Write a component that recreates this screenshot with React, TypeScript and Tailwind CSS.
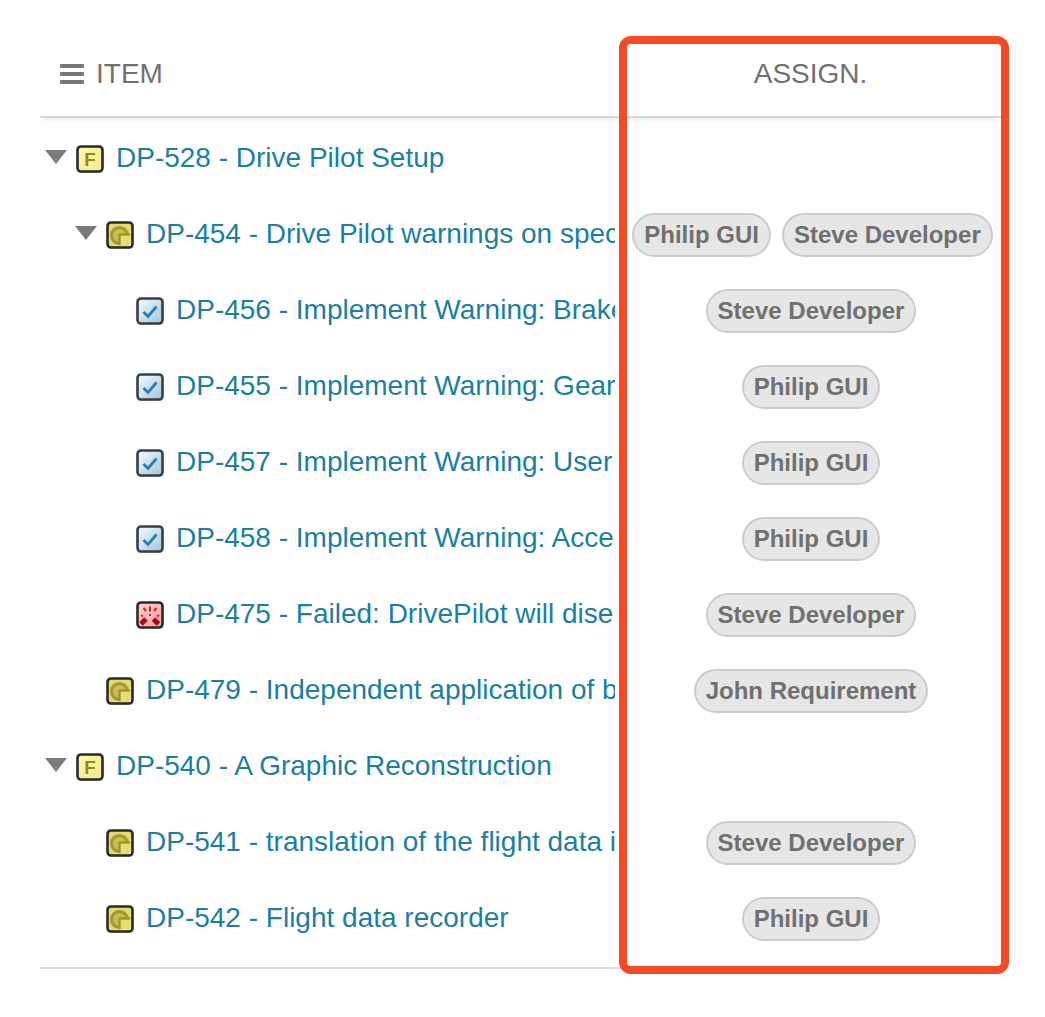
const rows = [
  { level: 0, icon: "feature", open: true, label: "DP-528 - Drive Pilot Setup", people: [] },
  { level: 1, icon: "goal", open: true, label: "DP-454 - Drive Pilot warnings on spec", people: ["Philip GUI", "Steve Developer"] },
  { level: 2, icon: "task", label: "DP-456 - Implement Warning: Brake", people: ["Steve Developer"] },
  { level: 2, icon: "task", label: "DP-455 - Implement Warning: Gear", people: ["Philip GUI"] },
  { level: 2, icon: "task", label: "DP-457 - Implement Warning: User", people: ["Philip GUI"] },
  { level: 2, icon: "task", label: "DP-458 - Implement Warning: Acce", people: ["Philip GUI"] },
  { level: 2, icon: "bug", label: "DP-475 - Failed: DrivePilot will dise", people: ["Steve Developer"] },
  { level: 1, icon: "goal", label: "DP-479 - Independent application of b", people: ["John Requirement"] },
  { level: 0, icon: "feature", open: true, label: "DP-540 - A Graphic Reconstruction", people: [] },
  { level: 1, icon: "goal", label: "DP-541 - translation of the flight data i", people: ["Steve Developer"] },
  { level: 1, icon: "goal", label: "DP-542 - Flight data recorder", people: ["Philip GUI"] },
];

function Frame({ id, from, to, stroke = "#2b2b2b" }: { id: string; from: string; to: string; stroke?: string }) {
  return (
    <>
      <defs>
        <linearGradient id={id} x1="0" y1="0" x2="1" y2="1">
          <stop offset="0" stopColor={from} />
          <stop offset="1" stopColor={to} />
        </linearGradient>
      </defs>
      <rect x="1.5" y="2" width="26" height="26" rx="4" fill="#000" opacity="0.18" />
      <rect x="1.5" y="1.5" width="25" height="25" rx="3.5" fill={`url(#${id})`} stroke={stroke} strokeWidth="2.6" />
    </>
  );
}

function RowIcon({ kind, id }: { kind: string; id: string }) {
  return (
    <svg width="29" height="29" viewBox="0 0 29 29" className="shrink-0 blur-[0.4px]">
      {kind === "feature" && (
        <>
          <Frame id={id} from="#fdfaa6" to="#f0e88c" />
          <text x="14" y="21" textAnchor="middle" fontSize="19" fontWeight="700" fill="#94862a" fontFamily="Liberation Sans, sans-serif">
            F
          </text>
        </>
      )}
      {kind === "goal" && (
        <>
          <Frame id={id} from="#e4da72" to="#e0d66c" />
          <circle cx="13.5" cy="14.5" r="8" fill="#c9be55" stroke="#a3972f" strokeWidth="3" />
          <rect x="14" y="14" width="11" height="11" fill="#e6dc78" />
          <path d="M24 13.5H13.5V24" fill="none" stroke="#a3972f" strokeWidth="2.4" />
        </>
      )}
      {kind === "task" && (
        <>
          <Frame id={id} from="#f4fcff" to="#9fc6da" stroke="#3a3f44" />
          <path d="M7.5 15l4.5 4.5 8.5-10" fill="none" stroke="#2b7fb5" strokeWidth="2.8" />
        </>
      )}
      {kind === "bug" && (
        <>
          <Frame id={id} from="#ffd4d4" to="#ff9a9a" />
          <path d="M5 23l5-5M22.5 23l-5-5" stroke="#a50d12" strokeWidth="5" />
          <path d="M14 5.5v5M14 13v2M7.5 7l2.5 3M20.5 7L18 10M5 14l2 1.5M23 14l-2 1.5" stroke="#c4252a" strokeWidth="2" />
        </>
      )}
    </svg>
  );
}

function Caret() {
  return (
    <svg width="22" height="14" viewBox="0 0 22 14" className="ml-[5px] mr-[3px] -mt-[3px] shrink-0">
      <path d="M0 0h22L11 14z" fill="#7b7b7b" />
    </svg>
  );
}

function Chip({ name }: { name: string }) {
  return (
    <span className="mt-[2px] flex h-[44px] items-center whitespace-nowrap rounded-full border-2 border-[#cccccc] bg-[#e6e6e6] px-[10px] text-[24px] font-bold text-[#707070]">
      {name}
    </span>
  );
}

export default function App() {
  return (
    <div className="min-h-[1017px] bg-white pl-[40px] pt-[36px] font-['Liberation_Sans',Arial,sans-serif]">
      <div className="relative w-[961px]">
        <div className="flex h-[82px] items-center border-b-2 border-[#d9d9d9] pb-[4px] text-[28px] text-[#707070] shadow-[0_5px_4px_-3px_rgba(0,0,0,0.08)]">
          <div className="flex w-[580px] items-center gap-[12px] pl-[20px]">
            <div className="-mt-[1px] flex h-[20px] w-[24px] flex-col justify-between">
              <div className="h-[4px] rounded-[1px] bg-[#777777]" />
              <div className="h-[4px] rounded-[1px] bg-[#777777]" />
              <div className="h-[4px] rounded-[1px] bg-[#777777]" />
            </div>
            <span>ITEM</span>
          </div>
          <div className="flex-1 text-center">ASSIGN.</div>
        </div>

        <div className="border-b-2 border-[#dddddd] pb-[11px] pt-[2px]">
          {rows.map((row, i) => (
            <div key={row.label} className="flex h-[76px] items-center">
              <div className="flex w-[575px] items-center overflow-hidden">
                <div
                  className={
                    row.level === 0
                      ? "flex shrink-0 items-center gap-[11px]"
                      : row.level === 1
                        ? "flex shrink-0 items-center gap-[11px] pl-[30px]"
                        : "flex shrink-0 items-center gap-[11px] pl-[60px]"
                  }
                >
                  {row.open ? <Caret /> : <div className="w-[30px] shrink-0" />}
                  <div className="-ml-[5px] mt-[3px] flex">
                    <RowIcon kind={row.icon} id={`icon-${i}`} />
                  </div>
                  <span className="whitespace-nowrap text-[28px] text-[#1a7fa3]">{row.label}</span>
                </div>
              </div>
              <div
                className={
                  row.people.length > 1
                    ? "flex flex-1 justify-center gap-[11px] pl-[9px]"
                    : "flex flex-1 justify-center gap-[11px] pl-[6px]"
                }
              >
                {row.people.map((name) => (
                  <Chip key={name} name={name} />
                ))}
              </div>
            </div>
          ))}
        </div>

        <div className="pointer-events-none absolute left-[579px] top-0 h-[938px] w-[390px] rounded-[12px] border-[8px] border-[#f64a25]" />
      </div>
    </div>
  );
}
